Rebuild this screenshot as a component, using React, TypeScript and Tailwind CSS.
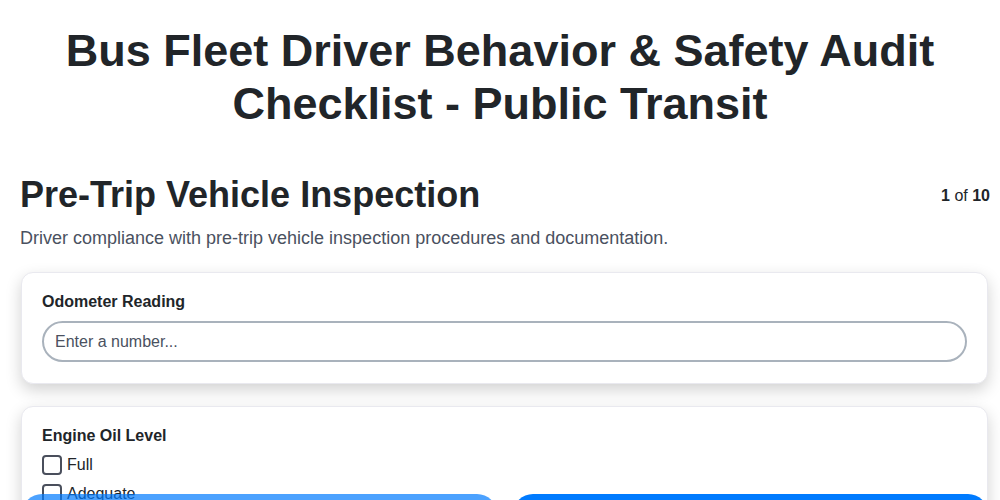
import { useState } from 'react';

const options = ['Full', 'Adequate', 'Low', 'Critical'];

export default function App() {
    const [odometer, setOdometer] = useState('');
    const [checked, setChecked] = useState<string[]>([]);

    const toggle = (opt: string) => {
        setChecked(prev => prev.includes(opt) ? prev.filter(o => o !== opt) : [...prev, opt]);
    };

    return (
        <div className="min-h-screen bg-white text-[#212529] font-['Liberation_Sans',Arial,sans-serif]">
            <h1 className="pt-[24px] px-10 text-center text-[45px] leading-[53px] font-bold">
                Bus Fleet Driver Behavior &amp; Safety Audit Checklist - Public Transit
            </h1>

            <div className="mt-[43px] pl-5 pr-[10px]">
                <div className="flex items-start justify-between">
                    <h2 className="text-[36px] leading-[44px] font-bold">Pre-Trip Vehicle Inspection</h2>
                    <div className="pt-[13px] text-base leading-5">
                        <span className="font-bold">1</span> of <span className="font-bold">10</span>
                    </div>
                </div>
                <p className="mt-[9px] text-lg leading-6 text-[#4a5160]">
                    Driver compliance with pre-trip vehicle inspection procedures and documentation.
                </p>
            </div>

            <div className="mt-[22px] pl-[21px] pr-[12px] flex flex-col gap-[22px] pb-24">
                <div className="rounded-xl border border-[#e9e9ef] bg-white px-5 pt-[19px] pb-[21px] shadow-[0_6px_16px_rgba(0,0,0,0.18)]">
                    <label className="block text-base leading-5 font-bold">Odometer Reading</label>
                    <input
                        type="number"
                        value={odometer}
                        onChange={e => setOdometer(e.target.value)}
                        placeholder="Enter a number..."
                        className="mt-[9px] block w-full h-[41px] rounded-full border-2 border-[#a9b2bc] px-[11px] text-base text-[#212529] placeholder:text-[#4a5160] outline-none"
                    />
                </div>

                <div className="rounded-xl border border-[#e9e9ef] bg-white px-5 pt-[19px] pb-[20px] shadow-[0_6px_16px_rgba(0,0,0,0.18)]">
                    <div className="text-base leading-5 font-bold">Engine Oil Level</div>
                    <div className="mt-[9px] flex flex-col gap-[9px]">
                        {options.map(opt => (
                            <label key={opt} className="flex items-center gap-[5px] text-base leading-5 cursor-pointer">
                                <span
                                    onClick={() => toggle(opt)}
                                    className={`w-[20px] h-[20px] rounded-[4px] border-2 border-[#4a4f5c] ${checked.includes(opt) ? 'bg-[#007bff]' : 'bg-white'}`}
                                />
                                <span>{opt}</span>
                            </label>
                        ))}
                    </div>
                </div>
            </div>

            {/* bottom navigation */}
            <div className="fixed left-0 right-0 top-[494px] pl-[22px] pr-[12px] flex gap-4">
                <button type="button" disabled className="flex-1 h-[48px] rounded-[20px] bg-[#007bff] opacity-70 text-white font-bold">
                    Previous
                </button>
                <button type="button" className="flex-1 h-[48px] rounded-[20px] bg-[#007bff] text-white font-bold">
                    Next
                </button>
            </div>
        </div>
    );
}
